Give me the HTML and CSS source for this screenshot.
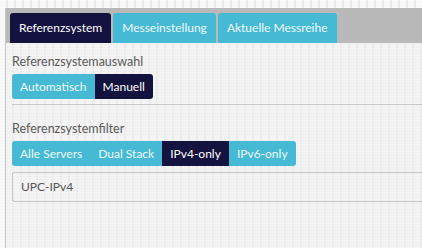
FILE: index.html
```html
<!DOCTYPE html>
<html lang="de">
<head>
    <meta charset="UTF-8">
    <meta name="viewport" content="width=device-width, initial-scale=1">
    <title>Referenzsystem</title>
    <link rel="stylesheet" href="styles.css">
</head>
<body>

<div class="frame">
    <ul class="tabs">
        <li class="tab active">Referenzsystem</li>
        <li class="tab">Messeinstellung</li>
        <li class="tab">Aktuelle Messreihe</li>
    </ul>

    <div class="panel">
        <div class="label">Referenzsystemauswahl</div>
        <div class="btn-group">
            <span class="btn">Automatisch</span>
            <span class="btn active">Manuell</span>
        </div>

        <hr class="divider">

        <div class="label">Referenzsystemfilter</div>
        <div class="btn-group">
            <span class="btn">Alle Servers</span>
            <span class="btn">Dual Stack</span>
            <span class="btn active">IPv4-only</span>
            <span class="btn">IPv6-only</span>
        </div>

        <div class="select">UPC-IPv4</div>
    </div>
</div>

</body>
</html>
```

FILE: styles.css
```css
body {
    font-family: "Lato", "Noto Sans", sans-serif;
    font-size: 12px;
    margin: 0;
    padding: 8px 0 0 5px;
    background-color: #ececec;
    background-image: repeating-linear-gradient(90deg, rgba(255, 255, 255, 0.7) 0 6px, transparent 6px 8px),
                      repeating-linear-gradient(0deg, transparent 0 2px, #e4e4e4 2px 3px);
    height: 240px;
    overflow: hidden;
}

.frame {
    border-left: 1px solid #c4c4c4;
    background-color: #eeeeee;
    background-image: repeating-linear-gradient(90deg, rgba(255, 255, 255, 0.35) 0 6px, transparent 6px 8px),
                      repeating-linear-gradient(0deg, transparent 0 2px, #e9e9e9 2px 3px);
    height: 240px;
}

.tabs {
    list-style: none;
    margin: 0;
    padding: 5px 0 0 4px;
    background-color: #b9b9b9;
    display: flex;
    gap: 2px;
    height: 30px;
}

.tab {
    background-color: #46b9d5;
    color: #eef9fc;
    padding: 0 9px;
    line-height: 30px;
    border-radius: 3px 3px 0 0;
}

.tab.active {
    background-color: #14123e;
    color: #ffffff;
}

.panel {
    padding: 10px 0 0 6px;
}

.label {
    color: #5a5a5a;
    font-size: 12.5px;
    line-height: 18px;
    margin-bottom: 3px;
}

.btn-group {
    display: flex;
    width: fit-content;
    border-radius: 3px;
    overflow: hidden;
}

.btn {
    background-color: #46b9d5;
    color: #eef9fc;
    padding: 0 8px;
    line-height: 25px;
}

.btn.active {
    background-color: #14123e;
    color: #ffffff;
}

.divider {
    border: none;
    border-top: 1px solid #c8c8c8;
    margin: 5px 0 15px 0;
}

.select {
    margin-top: 6px;
    border: 1px solid #c6c6c6;
    border-right: none;
    border-radius: 3px 0 0 3px;
    color: #555555;
    padding: 0 8px;
    line-height: 28px;
}
```
